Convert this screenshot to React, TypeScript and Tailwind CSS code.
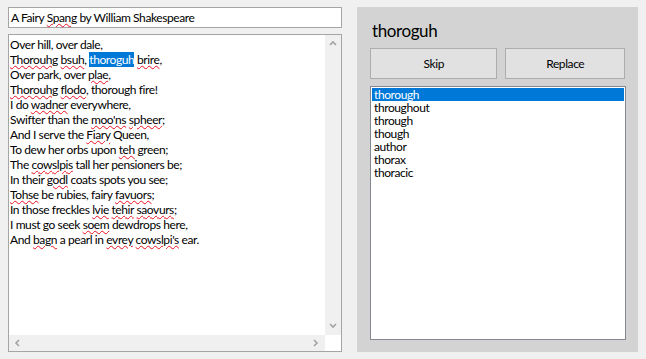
import React from "react";

const font = "font-['Segoe_UI','Lato',sans-serif]";

type Seg = { t: string; bad?: boolean; sel?: boolean };

const poem: Seg[][] = [
  [{ t: "Over hill, over dale," }],
  [
    { t: "Thorouhg", bad: true },
    { t: " " },
    { t: "bsuh", bad: true },
    { t: ", " },
    { t: "thoroguh", sel: true },
    { t: " " },
    { t: "brire", bad: true },
    { t: "," },
  ],
  [{ t: "Over park, over " }, { t: "plae", bad: true }, { t: "," }],
  [
    { t: "Thorouhg", bad: true },
    { t: " " },
    { t: "flodo", bad: true },
    { t: ", thorough fire!" },
  ],
  [{ t: "I do " }, { t: "wadner", bad: true }, { t: " everywhere," }],
  [
    { t: "Swifter than the " },
    { t: "moo'ns", bad: true },
    { t: " " },
    { t: "spheer", bad: true },
    { t: ";" },
  ],
  [{ t: "And I serve the " }, { t: "Fiary", bad: true }, { t: " Queen," }],
  [{ t: "To dew her orbs upon " }, { t: "teh", bad: true }, { t: " green;" }],
  [{ t: "The " }, { t: "cowslpis", bad: true }, { t: " tall her pensioners be;" }],
  [{ t: "In their " }, { t: "godl", bad: true }, { t: " coats spots you see;" }],
  [
    { t: "Tohse", bad: true },
    { t: " be rubies, fairy " },
    { t: "favuors", bad: true },
    { t: ";" },
  ],
  [
    { t: "In those freckles " },
    { t: "lvie", bad: true },
    { t: " " },
    { t: "tehir", bad: true },
    { t: " " },
    { t: "saovurs", bad: true },
    { t: ";" },
  ],
  [{ t: "I must go seek " }, { t: "soem", bad: true }, { t: " dewdrops here," }],
  [
    { t: "And " },
    { t: "bagn", bad: true },
    { t: " a pearl in " },
    { t: "evrey", bad: true },
    { t: " " },
    { t: "cowslpi's", bad: true },
    { t: " ear." },
  ],
];

const suggestions = ["thorough", "throughout", "through", "though", "author", "thorax", "thoracic"];

const Squiggle = "underline decoration-wavy decoration-[#e81123] decoration-1 underline-offset-[1px]";

const Chevron = ({ dir }: { dir: "up" | "down" | "left" | "right" }) => {
  const pts = {
    up: "1,5 4,2 7,5",
    down: "1,2 4,5 7,2",
    left: "5,1 2,4 5,7",
    right: "2,1 5,4 2,7",
  }[dir];
  return (
    <svg width="8" height="8" viewBox="0 0 8 8">
      <polyline points={pts} fill="none" stroke="#a3a3a3" strokeWidth="1.6" />
    </svg>
  );
};

export default function App() {
  return (
    <div className={`w-[646px] h-[359px] bg-[#f0f0f0] flex text-[12px] tracking-[-0.4px] text-black ${font}`}>
      {/* left: title + text editor */}
      <div className="pl-[8px] pt-[7px] w-[342px] flex flex-col gap-[6px]">
        <div className="h-[21px] border border-[#a5a5a5] bg-white px-[2px] leading-[19px]">
          A Fairy <span className={Squiggle}>Spang</span> by William Shakespeare
        </div>
        <div className="h-[318px] border border-[#a5a5a5] bg-white flex flex-col">
          <div className="flex-1 flex min-h-0">
            <div className="flex-1 pl-[1px] pt-[2px] leading-[15px]">
              {poem.map((line, i) => (
                <div key={i} className="whitespace-pre">
                  {line.map((s, j) =>
                    s.sel ? (
                      <span key={j} className="bg-[#0078d7] text-white">
                        {s.t}
                      </span>
                    ) : s.bad ? (
                      <span key={j} className={Squiggle}>
                        {s.t}
                      </span>
                    ) : (
                      <span key={j}>{s.t}</span>
                    )
                  )}
                </div>
              ))}
            </div>
            <div className="w-[16px] bg-[#f0f0f0] flex flex-col items-center justify-between py-[5px]">
              <Chevron dir="up" />
              <Chevron dir="down" />
            </div>
          </div>
          <div className="h-[16px] flex">
            <div className="flex-1 bg-[#f0f0f0] flex items-center justify-between px-[5px]">
              <Chevron dir="left" />
              <Chevron dir="right" />
            </div>
            <div className="w-[16px] bg-white" />
          </div>
        </div>
      </div>

      {/* right: spelling panel */}
      <div className="ml-[15px] mt-[7px] w-[281px] h-[345px] bg-[#d3d3d3] pl-[13px] pr-[12px] pt-[13px] flex flex-col">
        <div className="text-[17px] leading-[22px] pl-[2px]">thoroguh</div>
        <div className="mt-[6px] flex gap-[8px] pr-[1px]">
          <button className="w-[128px] h-[31px] bg-[#e1e1e1] border border-[#adadad]">Skip</button>
          <button className="w-[120px] h-[31px] bg-[#e1e1e1] border border-[#adadad]">Replace</button>
        </div>
        <div className="mt-[7px] h-[254px] border border-[#828790] bg-white p-[1px] leading-[13px]">
          {suggestions.map((s, i) => (
            <div key={s} className={i === 0 ? "bg-[#0078d7] text-white pl-[2px]" : "pl-[2px]"}>
              {s}
            </div>
          ))}
        </div>
      </div>
    </div>
  );
}
